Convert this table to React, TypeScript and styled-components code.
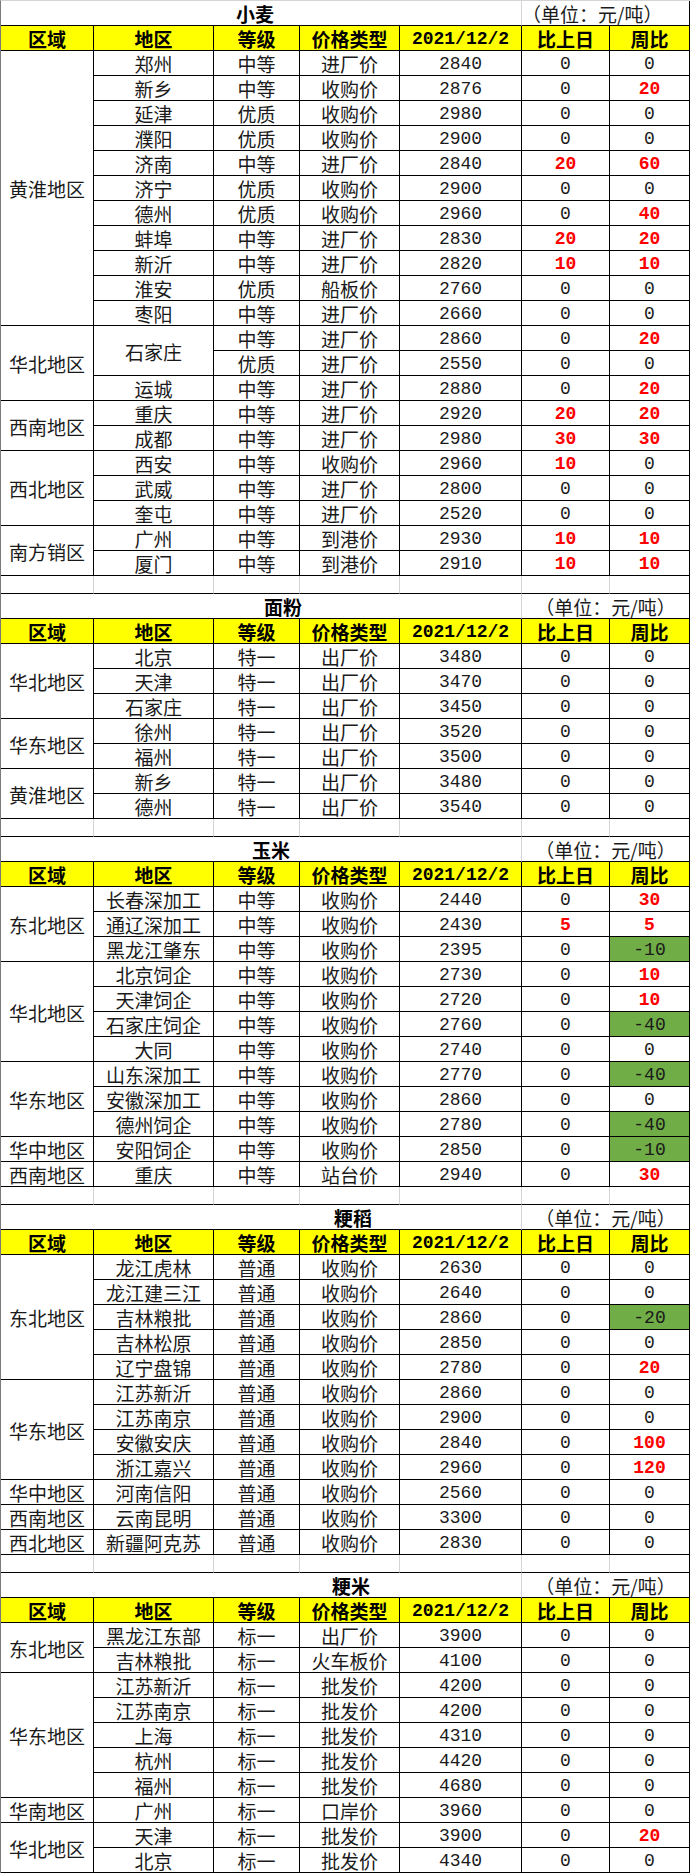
import React from 'react'
import styled, { createGlobalStyle } from 'styled-components'

type Row = { area?: string; areaSpan?: number; grade: string; kind: string; price: number; day: number; week: number }
type Group = { region: string; rows: Row[] }
type Section = { title: string; titleLeft: number; unitLeft?: boolean; groups: Group[] }

const r = (area: string | undefined, grade: string, kind: string, price: number, day = 0, week = 0, areaSpan = 1): Row => ({
  area,
  areaSpan,
  grade,
  kind,
  price,
  day,
  week,
})

const sections: Section[] = [
  {
    title: '小麦',
    titleLeft: 235,
    unitLeft: true,
    groups: [
      {
        region: '黄淮地区',
        rows: [
          r('郑州', '中等', '进厂价', 2840),
          r('新乡', '中等', '收购价', 2876, 0, 20),
          r('延津', '优质', '收购价', 2980),
          r('濮阳', '优质', '收购价', 2900),
          r('济南', '中等', '进厂价', 2840, 20, 60),
          r('济宁', '优质', '收购价', 2900),
          r('德州', '优质', '收购价', 2960, 0, 40),
          r('蚌埠', '中等', '进厂价', 2830, 20, 20),
          r('新沂', '中等', '进厂价', 2820, 10, 10),
          r('淮安', '优质', '船板价', 2760),
          r('枣阳', '中等', '进厂价', 2660),
        ],
      },
      {
        region: '华北地区',
        rows: [
          r('石家庄', '中等', '进厂价', 2860, 0, 20, 2),
          r(undefined, '优质', '进厂价', 2550),
          r('运城', '中等', '进厂价', 2880, 0, 20),
        ],
      },
      {
        region: '西南地区',
        rows: [r('重庆', '中等', '进厂价', 2920, 20, 20), r('成都', '中等', '进厂价', 2980, 30, 30)],
      },
      {
        region: '西北地区',
        rows: [r('西安', '中等', '收购价', 2960, 10, 0), r('武威', '中等', '进厂价', 2800), r('奎屯', '中等', '进厂价', 2520)],
      },
      {
        region: '南方销区',
        rows: [r('广州', '中等', '到港价', 2930, 10, 10), r('厦门', '中等', '到港价', 2910, 10, 10)],
      },
    ],
  },
  {
    title: '面粉',
    titleLeft: 263,
    groups: [
      {
        region: '华北地区',
        rows: [r('北京', '特一', '出厂价', 3480), r('天津', '特一', '出厂价', 3470), r('石家庄', '特一', '出厂价', 3450)],
      },
      { region: '华东地区', rows: [r('徐州', '特一', '出厂价', 3520), r('福州', '特一', '出厂价', 3500)] },
      { region: '黄淮地区', rows: [r('新乡', '特一', '出厂价', 3480), r('德州', '特一', '出厂价', 3540)] },
    ],
  },
  {
    title: '玉米',
    titleLeft: 251,
    groups: [
      {
        region: '东北地区',
        rows: [
          r('长春深加工', '中等', '收购价', 2440, 0, 30),
          r('通辽深加工', '中等', '收购价', 2430, 5, 5),
          r('黑龙江肇东', '中等', '收购价', 2395, 0, -10),
        ],
      },
      {
        region: '华北地区',
        rows: [
          r('北京饲企', '中等', '收购价', 2730, 0, 10),
          r('天津饲企', '中等', '收购价', 2720, 0, 10),
          r('石家庄饲企', '中等', '收购价', 2760, 0, -40),
          r('大同', '中等', '收购价', 2740),
        ],
      },
      {
        region: '华东地区',
        rows: [
          r('山东深加工', '中等', '收购价', 2770, 0, -40),
          r('安徽深加工', '中等', '收购价', 2860),
          r('德州饲企', '中等', '收购价', 2780, 0, -40),
        ],
      },
      { region: '华中地区', rows: [r('安阳饲企', '中等', '收购价', 2850, 0, -10)] },
      { region: '西南地区', rows: [r('重庆', '中等', '站台价', 2940, 0, 30)] },
    ],
  },
  {
    title: '粳稻',
    titleLeft: 333,
    groups: [
      {
        region: '东北地区',
        rows: [
          r('龙江虎林', '普通', '收购价', 2630),
          r('龙江建三江', '普通', '收购价', 2640),
          r('吉林粮批', '普通', '收购价', 2860, 0, -20),
          r('吉林松原', '普通', '收购价', 2850),
          r('辽宁盘锦', '普通', '收购价', 2780, 0, 20),
        ],
      },
      {
        region: '华东地区',
        rows: [
          r('江苏新沂', '普通', '收购价', 2860),
          r('江苏南京', '普通', '收购价', 2900),
          r('安徽安庆', '普通', '收购价', 2840, 0, 100),
          r('浙江嘉兴', '普通', '收购价', 2960, 0, 120),
        ],
      },
      { region: '华中地区', rows: [r('河南信阳', '普通', '收购价', 2560)] },
      { region: '西南地区', rows: [r('云南昆明', '普通', '收购价', 3300)] },
      { region: '西北地区', rows: [r('新疆阿克苏', '普通', '收购价', 2830)] },
    ],
  },
  {
    title: '粳米',
    titleLeft: 331,
    groups: [
      { region: '东北地区', rows: [r('黑龙江东部', '标一', '出厂价', 3900), r('吉林粮批', '标一', '火车板价', 4100)] },
      {
        region: '华东地区',
        rows: [
          r('江苏新沂', '标一', '批发价', 4200),
          r('江苏南京', '标一', '批发价', 4200),
          r('上海', '标一', '批发价', 4310),
          r('杭州', '标一', '批发价', 4420),
          r('福州', '标一', '批发价', 4680),
        ],
      },
      { region: '华南地区', rows: [r('广州', '标一', '口岸价', 3960)] },
      { region: '华北地区', rows: [r('天津', '标一', '批发价', 3900, 0, 20), r('北京', '标一', '批发价', 4340)] },
    ],
  },
]

const headers = ['区域', '地区', '等级', '价格类型', '2021/12/2', '比上日', '周比']

const GlobalStyle = createGlobalStyle`
  body {
    margin: 0;
    background: #fff;
  }
`

const COLS = '93px 120px 86px 100px 122px 88px 80px'
const CJK = `"Noto Sans CJK SC", sans-serif`
const NUM = `"Liberation Mono", "Noto Sans CJK SC", monospace`

const Sheet = styled.div`
  width: 690px;
  box-sizing: border-box;
  border-top: 1px solid #d4d4d4;
  border-left: 1px solid #7a7a7a;
  background: #fff;
`

const Grid = styled.div`
  display: grid;
  grid-template-columns: ${COLS};
  grid-auto-rows: 25px;
`

const Cell = styled.div<{ $rows?: number }>`
  grid-row: span ${(p) => p.$rows ?? 1};
  box-sizing: border-box;
  display: flex;
  align-items: center;
  justify-content: center;
  padding-top: 2px;
  border-right: 1px solid #000;
  border-bottom: 1px solid #000;
  font-family: ${CJK};
  font-size: 19px;
  line-height: 20px;
  color: #1a1a1a;
  white-space: nowrap;
`

const TitleCell = styled(Cell)<{ $left: number }>`
  grid-column: span 5;
  justify-content: flex-start;
  padding-left: ${(p) => p.$left}px;
  border-right-color: #d4d4d4;
  font-weight: 700;
  color: #000;
`

const UnitCell = styled(Cell)<{ $left?: boolean }>`
  grid-column: span 2;
  justify-content: ${(p) => (p.$left ? 'flex-start' : 'center')};
`

const HeadCell = styled(Cell)`
  background: #ffff00;
  font-weight: 700;
  color: #000;
`

const DateHead = styled(HeadCell)`
  font-family: ${NUM};
  font-size: 18px;
`

const NumCell = styled(Cell)`
  font-family: ${NUM};
  font-size: 18px;
`

const ChangeCell = styled(NumCell)<{ $tone: 'up' | 'down' | 'flat' }>`
  background: ${(p) => (p.$tone === 'down' ? '#70ad47' : 'transparent')};
  color: ${(p) => (p.$tone === 'up' ? '#ff0000' : '#1a1a1a')};
  font-weight: ${(p) => (p.$tone === 'up' ? 700 : 400)};
`

const GapRow = styled.div`
  display: grid;
  grid-template-columns: ${COLS};
  height: 18px;
`

const GapCell = styled.div<{ $edge?: boolean }>`
  box-sizing: border-box;
  border-right: 1px solid ${(p) => (p.$edge ? '#000' : '#d4d4d4')};
  border-bottom: 1px solid #000;
`

const tone = (v: number) => (v > 0 ? 'up' : v < 0 ? 'down' : 'flat')

const Change: React.FC<{ value: number }> = ({ value }) => <ChangeCell $tone={tone(value)}>{value}</ChangeCell>

const Block: React.FC<{ section: Section; last: boolean }> = ({ section, last }) => (
  <>
    <Grid>
      <TitleCell $left={section.titleLeft}>{section.title}</TitleCell>
      <UnitCell $left={section.unitLeft}>（单位：元/吨）</UnitCell>
      {headers.map((h) =>
        h.startsWith('2021') ? <DateHead key={h}>{h}</DateHead> : <HeadCell key={h}>{h}</HeadCell>
      )}
      {section.groups.map((g) =>
        g.rows.map((row, i) => (
          <React.Fragment key={g.region + i}>
            {i === 0 && <Cell $rows={g.rows.length}>{g.region}</Cell>}
            {row.area && <Cell $rows={row.areaSpan}>{row.area}</Cell>}
            <Cell>{row.grade}</Cell>
            <Cell>{row.kind}</Cell>
            <NumCell>{row.price}</NumCell>
            <Change value={row.day} />
            <Change value={row.week} />
          </React.Fragment>
        ))
      )}
    </Grid>
    {!last && (
      <GapRow>
        {headers.map((h, i) => (
          <GapCell key={h} $edge={i === headers.length - 1} />
        ))}
      </GapRow>
    )}
  </>
)

export default function App() {
  return (
    <>
      <GlobalStyle />
      <Sheet>
        {sections.map((s, i) => (
          <Block key={s.title} section={s} last={i === sections.length - 1} />
        ))}
      </Sheet>
    </>
  )
}
